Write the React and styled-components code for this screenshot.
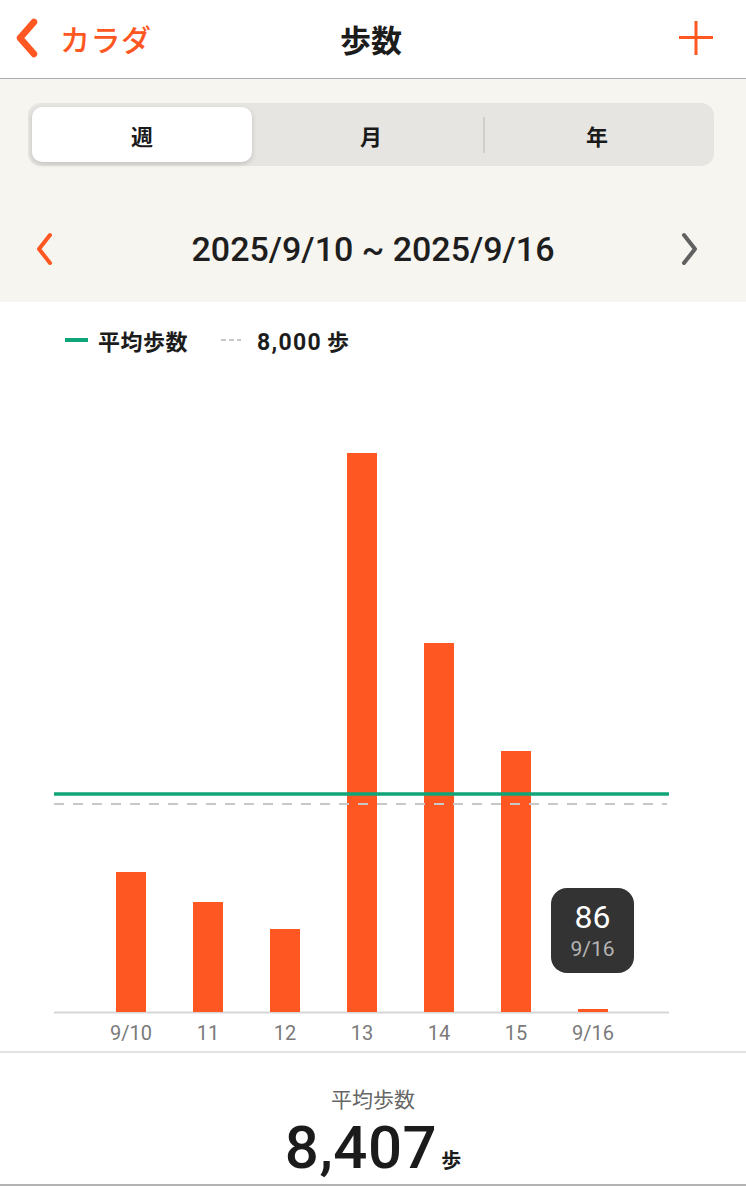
import React from "react";
import styled, { createGlobalStyle } from "styled-components";

const ORANGE = "#ff5722";
const GREEN = "#10a479";

const Global = createGlobalStyle`
  html, body { margin: 0; padding: 0; background: #ffffff; }
  body { font-family: "Roboto", "Noto Sans CJK JP", sans-serif; color: #1c1c1c; }
  * { box-sizing: border-box; }
`;

const Page = styled.div`
  width: 746px;
  height: 1186px;
  display: flex;
  flex-direction: column;
  background: #fff;
  overflow: hidden;
  border-bottom: 2px solid #b3b3b3;
`;

const Header = styled.header`
  height: 79px;
  flex: none;
  display: grid;
  grid-template-columns: 1fr auto 1fr;
  align-items: center;
  padding: 0 32px 2px 28px;
  border-bottom: 1px solid #ababab;
  background: #fff;
`;

const BackButton = styled.div`
  display: flex;
  align-items: center;
  gap: 18px;
  margin-left: -16px;
  color: ${ORANGE};
  font-family: "Noto Sans CJK JP", sans-serif;
  font-size: 30px;
  font-weight: 500;
  letter-spacing: 0.5px;
`;

const Title = styled.h1`
  margin: 0;
  font-family: "Noto Sans CJK JP", sans-serif;
  font-size: 31px;
  font-weight: 700;
  color: #1c1c1c;
`;

const AddButton = styled.div`
  justify-self: end;
  display: flex;
  align-items: center;
`;

const Controls = styled.section`
  flex: none;
  background: #f6f5f0;
  padding: 24px 32px 21px 28px;
`;

const Segmented = styled.div`
  height: 63px;
  border-radius: 13px;
  background: #e6e5e1;
  padding: 4px;
  display: grid;
  grid-template-columns: 1fr 1fr 1fr;
`;

const Segment = styled.div`
  position: relative;
  display: flex;
  align-items: center;
  justify-content: center;
  font-family: "Noto Sans CJK JP", sans-serif;
  font-size: 22px;
  font-weight: 700;
  color: #1a1a1a;
  border-radius: 10px;
  background: ${(p) => (p.$active ? "#fff" : "transparent")};
  box-shadow: ${(p) => (p.$active ? "0 2px 5px rgba(0,0,0,0.16)" : "none")};
  margin-right: ${(p) => (p.$active ? "6px" : "0")};
  &::before {
    content: "";
    display: ${(p) => (p.$divider ? "block" : "none")};
    position: absolute;
    left: -1px;
    top: 10px;
    bottom: 9px;
    width: 2px;
    background: #cfceca;
  }
`;

const DateRow = styled.div`
  margin-top: 51px;
  height: 64px;
  display: grid;
  grid-template-columns: 40px 1fr 40px;
  align-items: center;
  padding: 0 0 0 4px;
`;

const DateLabel = styled.div`
  text-align: center;
  font-size: 34px;
  font-weight: 500;
  color: #1e1e1e;
`;

const ChartSection = styled.section`
  flex: none;
  height: 751px;
  display: flex;
  flex-direction: column;
  border-bottom: 2px solid #e2e2e2;
`;

const Legend = styled.div`
  display: flex;
  align-items: center;
  padding: 26px 0 0 65px;
  height: 50px;
  gap: 10px;
  font-family: "Roboto", "Noto Sans CJK JP", sans-serif;
  font-size: 22px;
  font-weight: 700;
  color: #1c1c1c;
`;

const LegendText = styled.span`
  letter-spacing: 0.5px;
`;

const LegendNumber = styled.span`
  font-size: 23px;
  letter-spacing: 1.3px;
`;

const LegendUnit = styled.span`
  margin-left: 5px;
`;

const LegendMark = styled.span`
  width: ${(p) => (p.$dotted ? "20px" : "23px")};
  height: ${(p) => (p.$dotted ? "2px" : "4px")};
  background: ${(p) =>
    p.$dotted
      ? "repeating-linear-gradient(90deg, #c9c9c9 0 5px, transparent 5px 8px)"
      : GREEN};
  margin-left: ${(p) => (p.$dotted ? "23px" : "0")};
  margin-right: ${(p) => (p.$dotted ? "6px" : "0")};
`;

const ChartArea = styled.div`
  position: relative;
  flex: 1;
`;

const Tooltip = styled.div`
  position: absolute;
  left: 551px;
  top: 536px;
  width: 83px;
  height: 85px;
  border-radius: 16px;
  background: #333333;
  display: flex;
  flex-direction: column;
  align-items: center;
  justify-content: center;
  gap: 1px;
`;

const TipValue = styled.div`
  color: #fff;
  font-size: 32px;
  font-weight: 400;
  line-height: 36px;
`;

const TipDate = styled.div`
  color: #b5b5b5;
  font-size: 21px;
  line-height: 26px;
`;

const Summary = styled.section`
  flex: 1;
  display: flex;
  flex-direction: column;
  align-items: center;
  padding-top: 31px;
`;

const SummaryLabel = styled.div`
  font-family: "Noto Sans CJK JP", sans-serif;
  font-size: 21px;
  color: #666;
  line-height: 28px;
`;

const SummaryValue = styled.div`
  display: flex;
  align-items: baseline;
  gap: 4px;
  margin-top: 0;
  line-height: 72px;
`;

const BigNumber = styled.span`
  font-size: 60px;
  font-weight: 500;
  color: #1b1b1b;
  letter-spacing: 0.5px;
`;

const Unit = styled.span`
  font-family: "Noto Sans CJK JP", sans-serif;
  font-size: 20px;
  font-weight: 700;
  color: #1b1b1b;
`;

const bars = [
  { label: "9/10", top: 872 },
  { label: "11", top: 902 },
  { label: "12", top: 929 },
  { label: "13", top: 453 },
  { label: "14", top: 643 },
  { label: "15", top: 751 },
  { label: "9/16", top: 1009 },
];

const OFFSET = 352; // page y where chart svg starts

function Chart() {
  const base = 1012 - OFFSET;
  return (
    <svg width="746" height="699" viewBox="0 0 746 699">
      <line x1="54" x2="669" y1={base + 0.5} y2={base + 0.5} stroke="#d6d6d6" strokeWidth="2" />
      {bars.map((b, i) => {
        const cx = 131 + 77 * i;
        const y = b.top - OFFSET;
        return (
          <g key={b.label}>
            <rect x={cx - 15} y={y} width="30" height={base - y} fill={ORANGE} />
            <text
              x={cx}
              y={1040 - OFFSET}
              textAnchor="middle"
              fontFamily="Roboto, sans-serif"
              fontSize="20"
              fill="#7a7a7a"
            >
              {b.label}
            </text>
          </g>
        );
      })}
      <line
        x1="54"
        x2="667"
        y1={804 - OFFSET}
        y2={804 - OFFSET}
        stroke="#c8c8c8"
        strokeWidth="2"
        strokeDasharray="10 9"
      />
      <line x1="54" x2="669" y1={794 - OFFSET} y2={794 - OFFSET} stroke={GREEN} strokeWidth="3.5" />
    </svg>
  );
}

export default function App() {
  return (
    <>
      <Global />
      <Page>
        <Header>
          <BackButton>
            <svg width="30" height="42" viewBox="0 0 30 42">
              <path d="M22 5 L8 21 L22 37" fill="none" stroke={ORANGE} strokeWidth="6.5" strokeLinecap="round" strokeLinejoin="round" />
            </svg>
            <span>カラダ</span>
          </BackButton>
          <Title>歩数</Title>
          <AddButton>
            <svg width="36" height="36" viewBox="0 0 36 36">
              <path d="M18 1 V35 M1 17.5 H35" stroke={ORANGE} strokeWidth="3" />
            </svg>
          </AddButton>
        </Header>

        <Controls>
          <Segmented>
            <Segment $active>週</Segment>
            <Segment>月</Segment>
            <Segment $divider>年</Segment>
          </Segmented>
          <DateRow>
            <svg width="28" height="34" viewBox="0 0 28 34">
              <path d="M18 3 L7 17 L18 31" fill="none" stroke={ORANGE} strokeWidth="4" strokeLinecap="round" strokeLinejoin="round" />
            </svg>
            <DateLabel>2025/9/10 ~ 2025/9/16</DateLabel>
            <svg width="40" height="34" viewBox="0 0 40 34" style={{ justifySelf: "end" }}>
              <path d="M10 3 L21 17 L10 31" fill="none" stroke="#616161" strokeWidth="4" strokeLinecap="round" strokeLinejoin="round" />
            </svg>
          </DateRow>
        </Controls>

        <ChartSection>
          <Legend>
            <LegendMark />
            <LegendText>平均歩数</LegendText>
            <LegendMark $dotted />
            <span>
              <LegendNumber>8,000</LegendNumber>
              <LegendUnit>歩</LegendUnit>
            </span>
          </Legend>
          <ChartArea>
            <Chart />
            <Tooltip>
              <TipValue>86</TipValue>
              <TipDate>9/16</TipDate>
            </Tooltip>
          </ChartArea>
        </ChartSection>

        <Summary>
          <SummaryLabel>平均歩数</SummaryLabel>
          <SummaryValue>
            <BigNumber>8,407</BigNumber>
            <Unit>歩</Unit>
          </SummaryValue>
        </Summary>
      </Page>
    </>
  );
}
